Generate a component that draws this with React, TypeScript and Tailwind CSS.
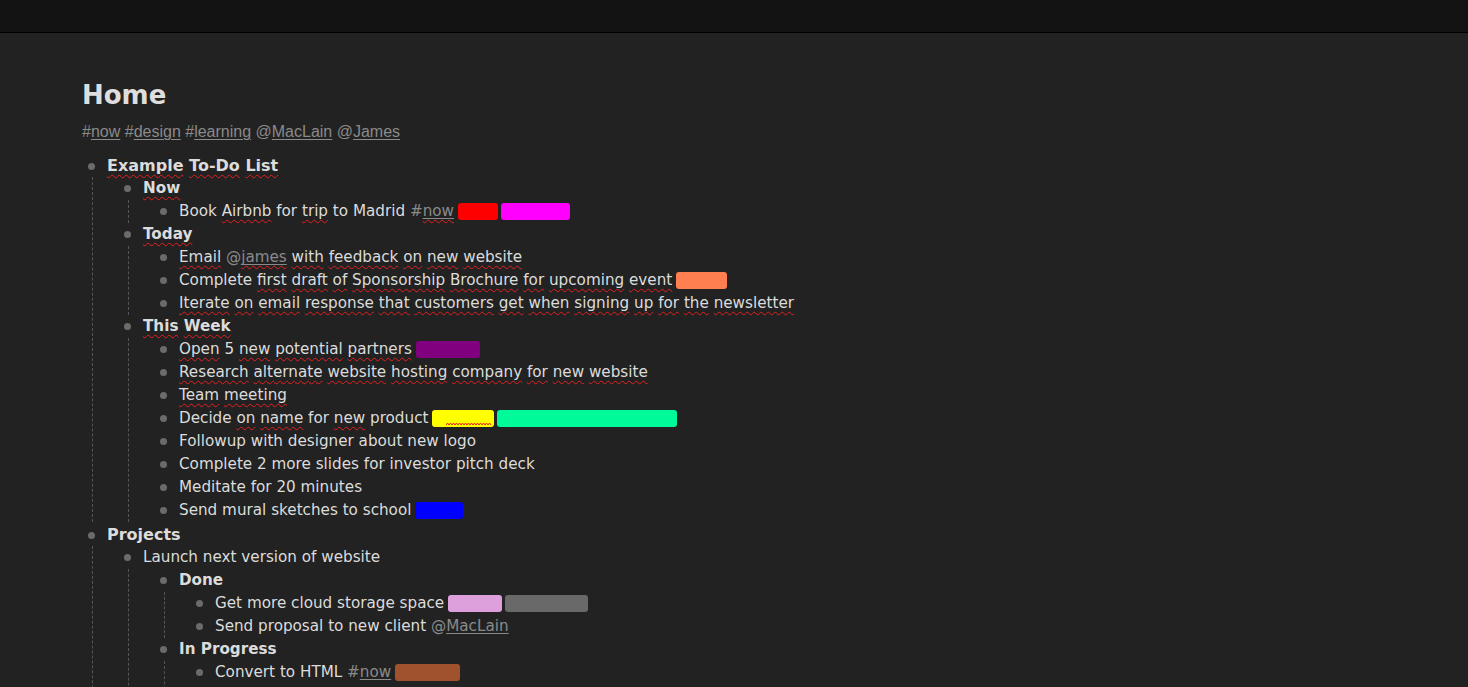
import React from "react";

type Box = { c: string; w: number; squiggle?: boolean };
type Node = { text: string; bold?: boolean; boxes?: Box[]; children?: Node[] };

const SQ =
  "underline decoration-wavy decoration-[#e5201f] decoration-1 underline-offset-[3px] [text-decoration-skip-ink:none]";

function Words({ text }: { text: string }) {
  const tokens = text.split(" ");
  return (
    <>
      {tokens.map((tok, i) => {
        let t = tok;
        let sq = false;
        if (t.startsWith("~")) {
          sq = true;
          t = t.slice(1);
        }
        let content: React.ReactNode;
        if (t.startsWith("#") || t.startsWith("@")) {
          const word = (
            <span className="underline decoration-[#8a8a8a] underline-offset-[2px] decoration-1">
              {t.slice(1)}
            </span>
          );
          content = (
            <span className="text-[#8a8a8a]">
              {t[0]}
              {sq ? <span className={SQ}>{word}</span> : word}
            </span>
          );
        } else {
          content = sq ? <span className={SQ}>{t}</span> : t;
        }
        return (
          <React.Fragment key={i}>
            {i > 0 ? " " : ""}
            {content}
          </React.Fragment>
        );
      })}
    </>
  );
}

function Boxes({ boxes }: { boxes: Box[] }) {
  return (
    <>
      {boxes.map((b, i) => (
        <span
          key={i}
          className={`relative inline-block h-[17px] rounded-[3px] align-[-4px] ${i === 0 ? "ml-[4px]" : "ml-[3px]"}`}
          style={{ width: b.w, backgroundColor: b.c }}
        >
          {b.squiggle ? (
            <svg
              className="absolute left-[14px] bottom-[1px]"
              width="46"
              height="4"
              viewBox="0 0 46 4"
            >
              <path
                d="M0 3 L1.5 1 L3 3 L4.5 1 L6 3 L7.5 1 L9 3 L10.5 1 L12 3 L13.5 1 L15 3 L16.5 1 L18 3 L19.5 1 L21 3 L22.5 1 L24 3 L25.5 1 L27 3 L28.5 1 L30 3 L31.5 1 L33 3 L34.5 1 L36 3 L37.5 1 L39 3 L40.5 1 L42 3 L43.5 1 L45 3"
                fill="none"
                stroke="#e5201f"
                strokeWidth="1"
              />
            </svg>
          ) : null}
        </span>
      ))}
    </>
  );
}

function Item({ node, level }: { node: Node; level: number }) {
  const rowCls =
    level === 0
      ? "flex text-[16px] leading-[22px] mt-[2px]"
      : "flex text-[15.2px] leading-[23px]";
  return (
    <li>
      <div className={rowCls}>
        <span className="w-[25px] shrink-0 flex items-center">
          <span className="ml-[6px] w-[7px] h-[7px] rounded-full bg-[#6b6b6b]" />
        </span>
        <span className={`whitespace-nowrap ${node.bold ? "font-bold" : "font-normal"}`}>
          <Words text={node.text} />
          {node.boxes ? <Boxes boxes={node.boxes} /> : null}
        </span>
      </div>
      {node.children ? (
        <ul className="ml-[10px] border-l border-dashed border-[#555555] pl-[25px]">
          {node.children.map((c, i) => (
            <Item key={i} node={c} level={level + 1} />
          ))}
        </ul>
      ) : null}
    </li>
  );
}

const tree: Node[] = [
  {
    text: "~Example ~To-Do ~List",
    bold: true,
    children: [
      {
        text: "~Now",
        bold: true,
        children: [
          {
            text: "Book ~Airbnb for ~trip to Madrid ~#now",
            boxes: [
              { c: "#ff0000", w: 40 },
              { c: "#ff00ff", w: 69 },
            ],
          },
        ],
      },
      {
        text: "~Today",
        bold: true,
        children: [
          { text: "~Email ~@james ~with ~feedback ~on ~new ~website" },
          {
            text: "Complete ~first ~draft ~of ~Sponsorship ~Brochure ~for ~upcoming ~event",
            boxes: [{ c: "#ff7f50", w: 51 }],
          },
          {
            text: "~Iterate ~on ~email ~response ~that ~customers ~get ~when ~signing ~up ~for ~the ~newsletter",
          },
        ],
      },
      {
        text: "~This ~Week",
        bold: true,
        children: [
          { text: "~Open 5 ~new ~potential ~partners", boxes: [{ c: "#800080", w: 64 }] },
          { text: "~Research ~alternate ~website ~hosting ~company ~for ~new ~website" },
          { text: "~Team ~meeting" },
          {
            text: "Decide ~on ~name for ~new product",
            boxes: [
              { c: "#ffff00", w: 62, squiggle: true },
              { c: "#00fa9a", w: 180 },
            ],
          },
          { text: "Followup with designer about new logo" },
          { text: "Complete 2 more slides for investor pitch deck" },
          { text: "Meditate for 20 minutes" },
          { text: "Send mural sketches to school", boxes: [{ c: "#0000ff", w: 48 }] },
        ],
      },
    ],
  },
  {
    text: "Projects",
    bold: true,
    children: [
      {
        text: "Launch next version of website",
        children: [
          {
            text: "Done",
            bold: true,
            children: [
              {
                text: "Get more cloud storage space",
                boxes: [
                  { c: "#dda0dd", w: 54 },
                  { c: "#696969", w: 83 },
                ],
              },
              { text: "Send proposal to new client @MacLain" },
            ],
          },
          {
            text: "In Progress",
            bold: true,
            children: [
              { text: "Convert to HTML #now", boxes: [{ c: "#a0522d", w: 65 }] },
              { text: "Write copy for landing page" },
              { text: "Set up analytics" },
            ],
          },
        ],
      },
      { text: "Plan team offsite" },
    ],
  },
];

export default function App() {
  return (
    <div className="h-screen overflow-hidden bg-[#222222] text-[#dcdcdc] [font-family:'DejaVu_Sans',sans-serif]">
      <div className="h-[32px] bg-[#131313] border-b border-black box-content" />
      <div className="pl-[82px] pt-[47px]">
        <h1 className="text-[26px] leading-[30px] font-bold text-[#dedede] [font-family:'DejaVu_Sans',sans-serif]">
          Home
        </h1>
        <div className="mt-[12px] text-[16px] leading-[20px] text-[#8a8a8a] [font-family:'Liberation_Sans',Arial,sans-serif]">
          {[
            ["#", "now"],
            ["#", "design"],
            ["#", "learning"],
            ["@", "MacLain"],
            ["@", "James"],
          ].map(([p, w], i) => (
            <React.Fragment key={i}>
              {i > 0 ? " " : ""}
              {p}
              <span className="underline underline-offset-[2px] decoration-1">{w}</span>
            </React.Fragment>
          ))}
        </div>
        <ul className="mt-[13px]">
          {tree.map((n, i) => (
            <Item key={i} node={n} level={0} />
          ))}
        </ul>
      </div>
    </div>
  );
}
